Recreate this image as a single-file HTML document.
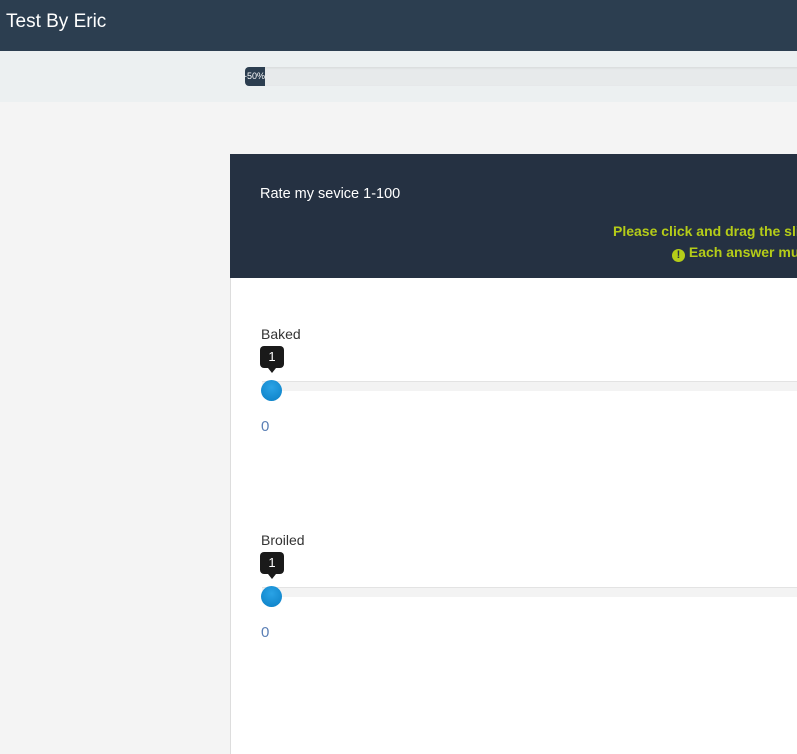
<!DOCTYPE html>
<html><head><meta charset="utf-8"><style>
*{margin:0;padding:0;box-sizing:border-box}
body{width:797px;height:751px;overflow:hidden;background:#f4f4f4;font-family:"Liberation Sans",sans-serif;position:relative}
.top{position:absolute;left:0;top:0;width:797px;height:51px;background:#2c3e50;color:#fff;font-size:19px;padding:11px 0 0 6px}
.bar{position:absolute;left:0;top:51px;width:797px;height:51px;background:#ecf0f1}
.track{position:absolute;left:245px;top:67px;width:560px;height:19px;background:#e7eaeb;border-radius:4px;box-shadow:inset 0 1px 2px rgba(0,0,0,.08)}
.fill{position:absolute;left:245px;top:67px;width:20px;height:19px;background:#2c3e50;border-radius:4px 0 0 4px;color:#fff;font-size:9px;line-height:19px;text-indent:-1px;white-space:nowrap;overflow:visible}
.card{position:absolute;left:230px;top:154px;width:580px;height:600px;background:#fff;border-left:1px solid #ddd}
.head{position:absolute;left:230px;top:154px;width:580px;height:124px;background:#253142}
.q{position:absolute;left:260px;top:186px;color:#fff;font-size:14.5px}
.g{position:absolute;color:#b5cc18;font-weight:bold;font-size:14px;white-space:nowrap}
.lbl{position:absolute;left:261px;color:#333;font-size:14px}
.tip{position:absolute;left:260px;width:24px;height:22px;background:#1a1a1a;border-radius:4px;color:#fff;font-size:13px;text-align:center;line-height:22px}
.tip:after{content:"";position:absolute;left:8px;bottom:-5px;border:4px solid transparent;border-top:5px solid #1a1a1a;border-bottom:0}
.rail{position:absolute;left:262px;width:540px;height:10px;background:#f3f3f3;border-top:1px solid #e3e3e3}
.knob{position:absolute;left:261px;width:21px;height:21px;border-radius:50%;background:radial-gradient(circle at 50% 35%,#2aa3e6,#0a7ec4)}
.zero{position:absolute;left:261px;color:#5a7fb5;font-size:15px}
</style></head><body>
<div class="top">Test By Eric</div>
<div class="bar"></div>
<div class="track"></div>
<div class="fill">-50%</div>
<div class="card"></div>
<div class="head"></div>
<div class="q">Rate my sevice 1-100</div>
<div class="g" style="left:613px;top:223px">Please click and drag the slider</div>
<div class="g" style="left:672px;top:244px"><span style="display:inline-block;width:13px;height:13px;border-radius:50%;background:#b5cc18;color:#253142;font-size:11px;text-align:center;line-height:13px;vertical-align:-1px">!</span> Each answer must</div>

<div class="lbl" style="top:326px">Baked</div>
<div class="tip" style="top:346px">1</div>
<div class="rail" style="top:381px"></div>
<div class="knob" style="top:380px"></div>
<div class="zero" style="top:418px">0</div>

<div class="lbl" style="top:532px">Broiled</div>
<div class="tip" style="top:552px">1</div>
<div class="rail" style="top:587px"></div>
<div class="knob" style="top:586px"></div>
<div class="zero" style="top:624px">0</div>
</body></html>
